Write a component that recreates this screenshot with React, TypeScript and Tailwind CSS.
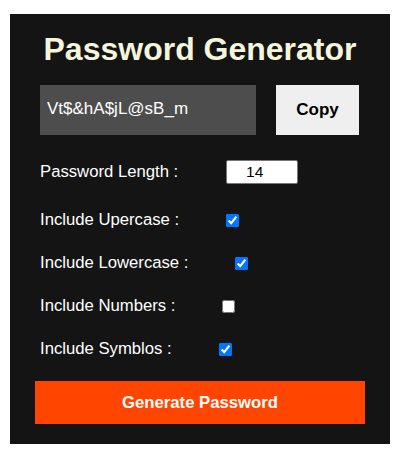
import { useState } from 'react'

const options = [
  { label: 'Include Upercase :', checked: true },
  { label: 'Include Lowercase :', checked: true },
  { label: 'Include Numbers :', checked: false },
  { label: 'Include Symblos :', checked: true },
]

export default function App() {
  const [length, setLength] = useState('14')

  return (
    <div className="min-h-screen bg-white pt-[14px] pl-[10px] font-['Liberation_Sans',Arial,sans-serif]">
      <div className="flex h-[430px] w-[380px] flex-col bg-[#141414] pt-[17px]">
        <h1 className="text-center text-[32px] font-bold leading-[37px] text-[#f5f5dc]">
          Password Generator
        </h1>

        <div className="mt-[17px] flex pl-[30px]">
          <input
            type="text"
            readOnly
            value="Vt$&hA$jL@sB_m"
            className="h-[50px] w-[216px] bg-[#4d4d4d] pb-[3px] pl-[7px] text-[17px] text-white outline-none"
          />
          <button className="ml-[20px] h-[50px] w-[83px] bg-[#efefef] text-[17px] font-bold text-black">
            Copy
          </button>
        </div>

        <div className="mt-[25px] flex flex-col pl-[30px] text-[16.7px] text-white">
          <div className="flex h-[24px] items-center gap-[48px]">
            <label>Password Length :</label>
            <input
              type="text"
              value={length}
              onChange={(e) => setLength(e.target.value)}
              className="h-[24px] w-[72px] rounded-[2px] border border-[#767676] bg-white pr-[15px] text-center text-[15.5px] text-black outline-none"
            />
          </div>

          {options.map((o, i) => (
            <div
              key={o.label}
              className={
                i === 0
                  ? 'mt-[24px] flex h-[24px] items-center gap-[47px]'
                  : 'mt-[19px] flex h-[24px] items-center gap-[47px]'
              }
            >
              <label>{o.label}</label>
              <input type="checkbox" defaultChecked={o.checked} className="h-[13px] w-[13px]" />
            </div>
          ))}
        </div>

        <button className="mx-[25px] mt-[20px] h-[43px] w-[330px] bg-[#ff4500] text-[16.7px] font-bold text-white">
          Generate Password
        </button>
      </div>
    </div>
  )
}
